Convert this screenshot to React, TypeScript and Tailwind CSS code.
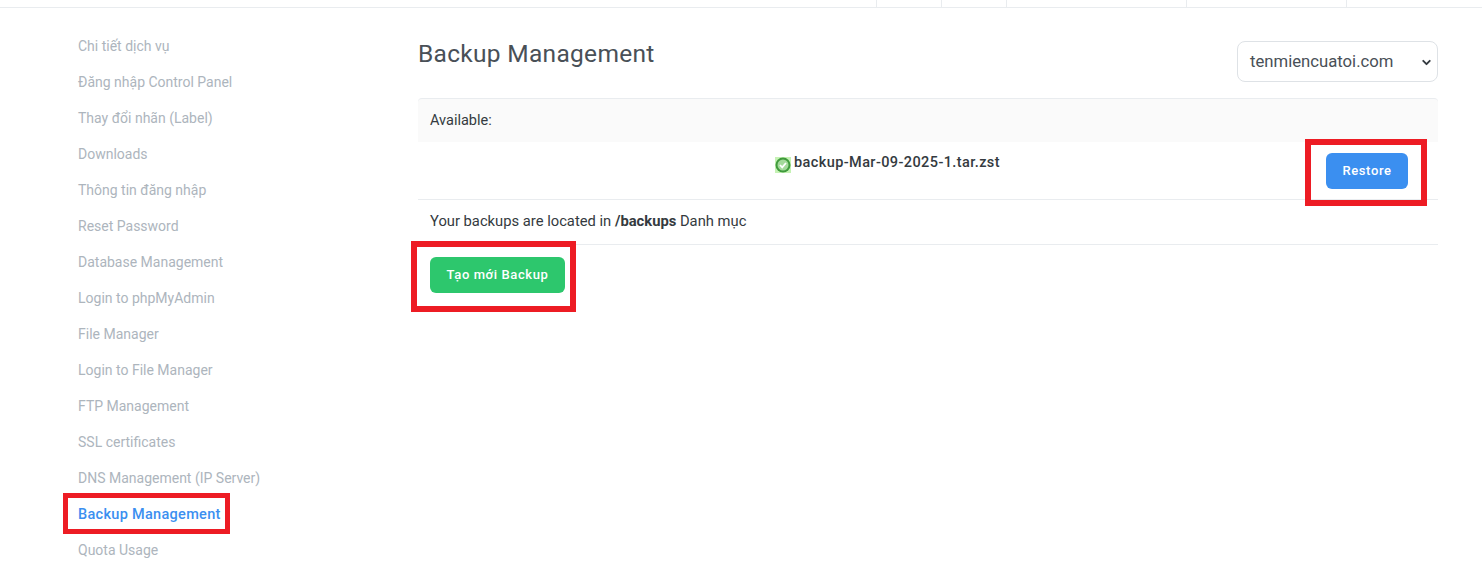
import { ChevronDown } from 'lucide-react';

const menu = [
  'Chi tiết dịch vụ',
  'Đăng nhập Control Panel',
  'Thay đổi nhãn (Label)',
  'Downloads',
  'Thông tin đăng nhập',
  'Reset Password',
  'Database Management',
  'Login to phpMyAdmin',
  'File Manager',
  'Login to File Manager',
  'FTP Management',
  'SSL certificates',
  'DNS Management (IP Server)',
  'Backup Management',
  'Quota Usage',
];

const topCells = [65, 65, 180, 160, 136];

function Mark({ className }: { className: string }) {
  return <div className={`absolute border-solid border-[#ed1c24] pointer-events-none ${className}`} />;
}

function OkIcon() {
  return (
    <svg width="16" height="16" viewBox="0 0 16 16" className="block shrink-0">
      <rect width="16" height="16" fill="#c5f2b4" />
      <circle cx="8" cy="8" r="7.5" fill="#3f9a3c" />
      <circle cx="8" cy="8" r="5.5" fill="#a3d99a" />
      <path d="M5 8l2.2 2.3 3.8-4.3" fill="none" stroke="#fff" strokeWidth="1.8" />
    </svg>
  );
}

export default function App() {
  return (
    <div className="relative h-[581px] w-[1482px] overflow-hidden bg-white font-['Roboto',sans-serif] text-[14px] text-[#343a40]">
      <div className="flex h-2 justify-end border-b border-[#e9ecef]">
        {topCells.map((w, i) => (
          <div key={i} className="border-l border-[#e9ecef]" style={{ width: w }} />
        ))}
      </div>

      <div className="flex">
        <aside className="w-[418px] shrink-0 pl-[78px] pt-5">
          {menu.map((item) => (
            <div
              key={item}
              className={
                item === 'Backup Management'
                  ? 'flex h-9 items-center pt-[2px] text-[14.5px] font-medium tracking-[0.3px] text-[#3b8ff0]'
                  : 'flex h-9 items-center text-[14px] text-[#adb5bd]'
              }
            >
              {item}
            </div>
          ))}
        </aside>

        <main className="w-[1020px]">
          <div className="flex h-[90px] items-start justify-between pt-[33px]">
            <h1 className="mt-[-2px] text-[24.5px] leading-[30px] tracking-[0.3px] text-[#495057]">Backup Management</h1>
            <div className="relative flex h-[41px] w-[201px] items-center rounded-lg border border-[#dee2e6] pl-[12px] pt-[1px] text-[16.7px] text-[#495057]">
              tenmiencuatoi.com
              <ChevronDown size={13} strokeWidth={3.5} className="absolute right-[4px] top-[14px] text-[#343a40]" />
            </div>
          </div>

          <div className="flex h-11 items-center rounded-t border-t border-[#e9ecef] bg-[#fafafa] px-3 text-[14.5px] text-[#343a40]">Available:</div>

          <div className="relative flex h-[58px] justify-center border-b border-[#e9ecef] pr-[81px] pt-[11px]">
            <div className="flex h-5 items-center gap-[3px] text-[14.5px] font-medium tracking-[0.4px]">
              <span className="mt-[3px]"><OkIcon /></span>
              backup-Mar-09-2025-1.tar.zst
            </div>
            <button
              type="button"
              className="absolute right-[30px] top-[11px] h-9 w-[82px] rounded-md bg-[#3b8ff0] text-[13px] font-medium tracking-[0.6px] text-white"
            >
              Restore
            </button>
          </div>

          <div className="flex h-[45px] items-center border-b border-[#e9ecef] px-3 pb-[1px] text-[14.75px]">
            <span>
              Your backups are located in <b className="font-bold">/backups</b> Danh mục
            </span>
          </div>

          <div className="px-3 pt-3">
            <button type="button" className="h-9 w-[135px] rounded-md bg-[#2dc76d] text-[13px] font-medium tracking-[0.6px] text-white">
              Tạo mới Backup
            </button>
          </div>
        </main>
      </div>

      <Mark className="left-[63px] top-[493px] h-[41px] w-[167px] border-[5px]" />
      <Mark className="left-[1305px] top-[139px] h-[67px] w-[122px] border-[6px]" />
      <Mark className="left-[411px] top-[241px] h-[71px] w-[165px] border-[6px]" />
    </div>
  );
}
